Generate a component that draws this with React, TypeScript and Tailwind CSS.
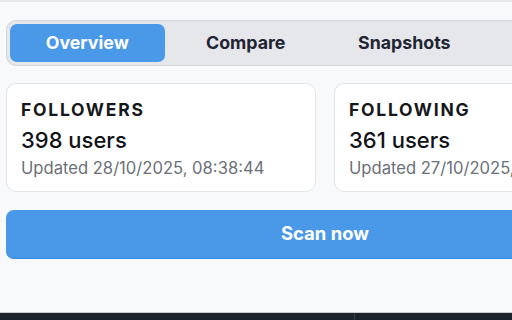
export default function App() {
  const font = { fontFamily: 'Inter, "Liberation Sans", sans-serif' };
  return (
    <div className="w-[512px] h-[320px] overflow-hidden bg-[#1c222b] flex flex-col" style={font}>
      <div className="w-[650px] h-[313px] shrink-0 bg-[#f8f9fb] border-t-2 border-[#e8e9ec] border-b border-b-[#c9cbcf] px-[6px] pt-[18px] flex flex-col">
        <div className="h-[46px] rounded-[10px] border border-[#d3d5d9] bg-[#e6e7eb] p-[3px] grid grid-cols-4 gap-[4px]">
          <div className="rounded-[7px] bg-[#4a98e8] text-white font-bold text-[17.8px] flex items-center justify-center">Overview</div>
          <div className="text-[#1f2533] font-bold text-[17.8px] flex items-center justify-center">Compare</div>
          <div className="text-[#1f2533] font-bold text-[17.8px] flex items-center justify-center">Snapshots</div>
          <div className="text-[#1f2533] font-bold text-[17.8px] flex items-center justify-center">Settings</div>
        </div>
        <div className="mt-[17px] grid grid-cols-2 gap-[18px]">
          {[
            { t: "FOLLOWERS", n: "398 users", u: "Updated 28/10/2025, 08:38:44" },
            { t: "FOLLOWING", n: "361 users", u: "Updated 27/10/2025, 08:12:05" },
          ].map((c) => (
            <div key={c.t} className="h-[109px] rounded-[10px] border border-[#e3e5e8] bg-white px-[14px] pt-[15px]">
              <div className="text-[17.5px] font-bold tracking-[0.1em] text-[#16181d] leading-[22px]">{c.t}</div>
              <div className="mt-[5px] text-[22px] font-medium text-[#111318] leading-[28px]">{c.n}</div>
              <div className="mt-[4px] text-[16.6px] text-[#6b7079] leading-[20px]">{c.u}</div>
            </div>
          ))}
        </div>
        <button className="mt-[18px] h-[49px] rounded-[8px] bg-[#4a98e8] border-b border-[#2f8ae6] text-white font-bold text-[18.5px]">Scan now</button>
      </div>
      <div className="flex-1 flex">
        <div className="w-[355px] border-r border-[#3a404a]"></div>
      </div>
    </div>
  );
}
